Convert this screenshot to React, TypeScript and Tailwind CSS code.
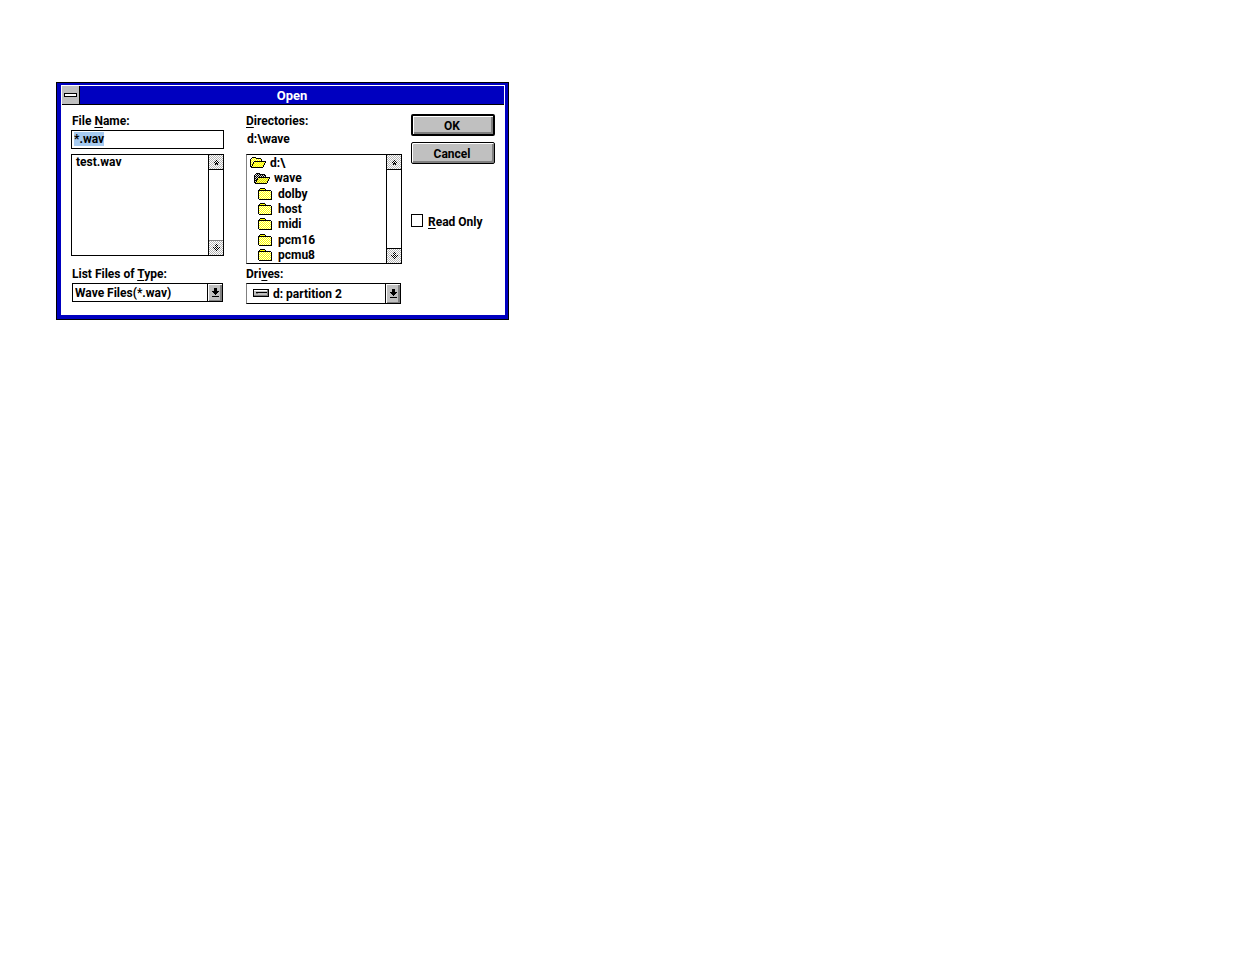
import { useEffect, useRef, type ReactNode } from "react";

function Key({ children }: { children: ReactNode }) {
  return <span className="underline decoration-1 underline-offset-2">{children}</span>;
}

function Pixels({ points, fill = "#000" }: { points: string[]; fill?: string }) {
  return (
    <>
      {points.flatMap((row, y) =>
        [...row].map((c, x) =>
          c === "#" ? <rect key={`${x}-${y}`} x={x} y={y} width="1" height="1" fill={fill} /> : null,
        ),
      )}
    </>
  );
}

const UP = ["...#...", "..#.#..", ".#.#.#.", "..###..", "..#.#.."];
const DOWN = ["...#...", "..#.#..", "...#...", "#.#.#.#", ".#.#.#.", "..#.#..", "...#..."];
const DROP = ["..###..", "..###..", "..###..", "#######", ".#####.", "..###..", "...#...", ".......", "#######"];

function ScrollButton({ dir, id }: { dir: "up" | "down"; id: string }) {
  return (
    <button type="button" disabled aria-label={`Scroll ${dir}`} className="block h-[14px] w-full">
      <svg width="100%" height="14" shapeRendering="crispEdges" className="block">
        <defs>
          <pattern id={id} width="2" height="2" patternUnits="userSpaceOnUse">
            <rect width="2" height="2" fill="#fff" />
            <rect width="1" height="1" fill="#b4b4b4" />
            <rect x="1" y="1" width="1" height="1" fill="#b4b4b4" />
          </pattern>
        </defs>
        <rect width="100%" height="14" fill={`url(#${id})`} />
        <g transform={dir === "up" ? "translate(4 5)" : "translate(4 3)"}>
          <Pixels points={dir === "up" ? UP : DOWN} />
        </g>
      </svg>
    </button>
  );
}

function ScrollBar({ id, soft }: { id: string; soft?: boolean }) {
  return (
    <div className="flex w-[15px] shrink-0 flex-col justify-between border-l border-black">
      <div className="border-b border-black">
        <ScrollButton dir="up" id={`${id}-up`} />
      </div>
      <div className={soft ? "border-t border-[#808080]" : "border-t border-black"}>
        <ScrollButton dir="down" id={`${id}-down`} />
      </div>
    </div>
  );
}

function DropArrow() {
  return (
    <span className="pointer-events-none absolute inset-y-px right-px flex w-[15px] items-center justify-center border-l border-black bg-[#c0c0c0] shadow-[inset_1px_1px_0_#fff,inset_-2px_-1px_0_#808080]">
      <svg width="7" height="9" shapeRendering="crispEdges">
        <Pixels points={DROP} />
      </svg>
    </span>
  );
}

function Dither({ id, dark, light }: { id: string; dark: string; light: string }) {
  return (
    <defs>
      <pattern id={id} width="2" height="2" patternUnits="userSpaceOnUse">
        <rect width="2" height="2" fill={light} />
        <rect width="1" height="1" fill={dark} />
        <rect x="1" y="1" width="1" height="1" fill={dark} />
      </pattern>
    </defs>
  );
}

const OPEN_LINES = [
  "..####..........",
  ".#....#####.....",
  "#..........#....",
  "#..........#....",
  "#...############",
  "#..#...........#",
  "#..#..........#.",
  "#.#...........#.",
  "#.#..........#..",
  "##...........#..",
  ".############...",
];

const CLOSED_LINES = [
  "..#####.......",
  ".#.....#......",
  "#############.",
  "#............#",
  "#............#",
  "#............#",
  "#............#",
  "#............#",
  "#............#",
  "#............#",
  "#............#",
  ".#############",
];

function OpenFolder({ current }: { current?: boolean }) {
  const id = current ? "open-current" : "open-root";
  return (
    <svg width="16" height="11" shapeRendering="crispEdges" className="shrink-0">
      <Dither id={`${id}-back`} dark={current ? "#000000" : "#ffff00"} light={current ? "#d8d8d8" : "#ffffc0"} />
      <Dither id={`${id}-front`} dark={current ? "#d8d800" : "#ffff00"} light={current ? "#ffff60" : "#ffff60"} />
      <path d="M2 1h4v1h5v3H4v2H3v2H1V2h1z" fill={`url(#${id}-back)`} />
      <path d="M4 5h11v1h-1v2h-1v2H2V9h1V7h1z" fill={`url(#${id}-front)`} />
      <Pixels points={OPEN_LINES} />
    </svg>
  );
}

function ClosedFolder({ id }: { id: string }) {
  return (
    <svg width="14" height="12" shapeRendering="crispEdges" className="shrink-0">
      <Dither id={id} dark="#ffff00" light="#ffffe0" />
      <rect x="2" y="1" width="5" height="1" fill="#ffff00" />
      <rect x="1" y="3" width="12" height="8" fill={`url(#${id})`} />
      <Pixels points={CLOSED_LINES} />
    </svg>
  );
}

function DriveIcon() {
  return (
    <svg width="16" height="8" shapeRendering="crispEdges" className="pointer-events-none absolute left-[7px] top-[6px]">
      <rect width="16" height="8" fill="#000" />
      <rect x="1" y="1" width="14" height="6" fill="#808080" />
      <rect x="1" y="1" width="13" height="1" fill="#fff" />
      <rect x="1" y="2" width="13" height="4" fill="#c0c0c0" />
      <rect x="3" y="3" width="11" height="1" fill="#000" />
      <rect x="3" y="4" width="2" height="1" fill="#808080" />
    </svg>
  );
}

const folders = ["dolby", "host", "midi", "pcm16", "pcmu8"];

export default function App() {
  const fileName = useRef<HTMLInputElement>(null);
  useEffect(() => {
    fileName.current?.focus();
    fileName.current?.select();
  }, []);

  return (
    <main className="px-14 pb-14 pt-[82px] font-['Roboto',sans-serif] text-[12px] font-bold leading-4 text-black">
      <form
        role="dialog"
        aria-labelledby="dialog-title"
        onSubmit={(e) => e.preventDefault()}
        className="w-full max-w-[453px] border border-black bg-[#0000c0] pb-1 pl-1 pr-[3px] pt-0.5"
      >
        <div className="bg-white">
          <div className="px-px pt-px">
            <header className="flex h-[19px] border-b border-black bg-[#0000c0]">
              <button
                type="button"
                aria-label="Control menu"
                className="flex w-[18px] items-center justify-center border-r border-black bg-[#c0c0c0]"
              >
                <span className="block h-[4px] w-[13px] border border-black bg-white" />
              </button>
              <h1 id="dialog-title" className="flex-1 text-center text-[13px] leading-[19px] text-white">
                Open
              </h1>
            </header>
          </div>

          <div className="flex items-start px-[10px] pb-[11px] pt-2">
            <section className="mr-[22px] flex flex-[153] flex-col">
              <label htmlFor="file-name" className="pl-px">
                File <Key>N</Key>ame:
              </label>
              <input
                id="file-name"
                ref={fileName}
                type="text"
                defaultValue="*.wav"
                className="mt-px h-[19px] w-full border border-black bg-white px-0.5 pb-px outline-none selection:bg-[#a6caf0] selection:text-black"
              />
              <div className="mt-[5px] flex h-[102px] border border-black">
                <ul role="listbox" aria-label="Files" className="flex-1 pl-1">
                  <li role="option" aria-selected={false} className="leading-[14px]">
                    test.wav
                  </li>
                </ul>
                <ScrollBar id="files" soft />
              </div>
              <label htmlFor="file-type" className="mt-[10px] pl-px">
                List Files of <Key>T</Key>ype:
              </label>
              <div className="relative mx-px mt-px">
                <select
                  id="file-type"
                  className="block h-[19px] w-full appearance-none border border-black bg-white pl-0.5 pr-4 outline-none"
                >
                  <option>Wave Files(*.wav)</option>
                </select>
                <DropArrow />
              </div>
            </section>

            <section className="mr-[9px] flex flex-[156] flex-col">
              <h2 id="directories">
                <Key>D</Key>irectories:
              </h2>
              <p className="mt-px h-[19px] pl-px leading-[19px]">d:\wave</p>
              <div className="mt-[5px] flex h-[110px] border border-black border-l-[#808080]">
                <ul
                  role="listbox"
                  aria-labelledby="directories"
                  className="flex flex-1 flex-col pl-[3px] leading-[14px]"
                >
                  <li role="option" aria-selected={false} className="flex flex-1 items-center gap-1">
                    <OpenFolder />
                    d:\
                  </li>
                  <li role="option" aria-selected={true} className="flex flex-1 items-center gap-1 pl-1">
                    <OpenFolder current />
                    wave
                  </li>
                  {folders.map((name) => (
                    <li
                      key={name}
                      role="option"
                      aria-selected={false}
                      className="flex flex-1 items-center gap-[6px] pl-2"
                    >
                      <ClosedFolder id={`folder-${name}`} />
                      {name}
                    </li>
                  ))}
                </ul>
                <ScrollBar id="directories-scroll" />
              </div>
              <label htmlFor="drive" className="mt-0.5">
                Dri<Key>v</Key>es:
              </label>
              <div className="relative mr-px mt-px">
                <select
                  id="drive"
                  className="block h-[21px] w-full appearance-none border border-black border-l-[#808080] bg-white pl-[26px] pr-4 outline-none"
                >
                  <option>d: partition 2</option>
                </select>
                <DriveIcon />
                <DropArrow />
              </div>
            </section>

            <section className="flex flex-[84] flex-col pt-px">
              <button
                type="submit"
                className="h-[22px] rounded-[2px] border-2 border-black bg-[#c0c0c0] pr-0.5 pt-px shadow-[inset_1px_1px_0_#fff,inset_-2px_-2px_0_#808080]"
              >
                OK
              </button>
              <button
                type="button"
                className="mt-[6px] h-[22px] rounded-[2px] border border-black bg-[#c0c0c0] pr-0.5 pt-px shadow-[inset_1px_1px_0_#fff,inset_-2px_-2px_0_#808080]"
              >
                Cancel
              </button>
              <label className="mt-[50px] flex items-start gap-[5px] whitespace-nowrap">
                <input
                  type="checkbox"
                  className="h-[13px] w-3 shrink-0 appearance-none border border-black bg-white checked:bg-black"
                />
                <span>
                  <Key>R</Key>ead Only
                </span>
              </label>
            </section>
          </div>
        </div>
      </form>
    </main>
  );
}
